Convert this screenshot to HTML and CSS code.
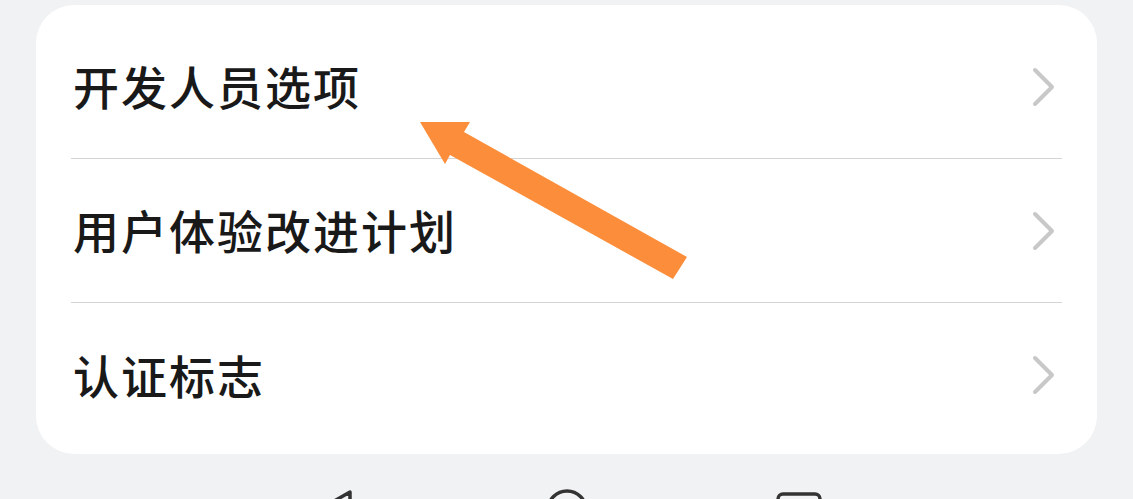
FILE: index.html
```html
<!DOCTYPE html>
<html lang="zh-CN">
<head>
  <meta charset="UTF-8" />
  <meta name="viewport" content="width=device-width, initial-scale=1.0"/>
  <title>设置</title>
  <link rel="stylesheet" href="styles.css">
</head>
<body>
  <div class="card">
    <div class="row">
      <div class="row-inner">
        <span class="label">开发人员选项</span>
        <svg class="chevron" width="26" height="40" viewBox="0 0 26 40"><path d="M4 3 L21 20 L4 37" /></svg>
      </div>
    </div>
    <div class="row">
      <div class="row-inner">
        <span class="label">用户体验改进计划</span>
        <svg class="chevron" width="26" height="40" viewBox="0 0 26 40"><path d="M4 3 L21 20 L4 37" /></svg>
      </div>
    </div>
    <div class="row last">
      <div class="row-inner">
        <span class="label">认证标志</span>
        <svg class="chevron" width="26" height="40" viewBox="0 0 26 40"><path d="M4 3 L21 20 L4 37" /></svg>
      </div>
    </div>
  </div>

  <div class="navbar">
    <svg class="nav-icon" width="60" height="50" viewBox="0 0 60 50"><path d="M45 4 L45 36 L17 20 Z" /></svg>
    <svg class="nav-icon" width="60" height="50" viewBox="0 0 60 50"><circle cx="30" cy="22" r="19" /></svg>
    <svg class="nav-icon" width="60" height="50" viewBox="0 0 60 50"><rect x="9" y="6" width="42" height="40" rx="5" /></svg>
  </div>

  <!-- annotation arrow drawn over the screenshot -->
  <svg class="pointer" width="1133" height="499" viewBox="0 0 1133 499">
    <polygon points="420,122 470,122 464,132 687,257 673,279 450,155 445,164" />
  </svg>
</body>
</html>
```

FILE: styles.css
```css
body {
  font-family: "Noto Sans CJK SC", "Noto Sans", sans-serif;
  background-color: #f1f2f4;
  margin: 0;
  padding: 0;
  height: 499px;
  overflow: hidden;
  position: relative;
}
.card {
  background-color: #ffffff;
  margin: 5px 36px 0 36px;
  padding: 10px 0 7px 0;
  border-radius: 38px;
}
.row {
  padding: 0 35px;
}
.row-inner {
  height: 143px;
  display: flex;
  align-items: center;
  justify-content: space-between;
  border-bottom: 1px solid #d4d4d4;
}
.row.last .row-inner {
  border-bottom: none;
  height: 144px;
}
.label {
  font-size: 46px;
  font-weight: 500;
  color: #191919;
  padding-left: 2px;
  letter-spacing: 2px;
  margin-top: -3px;
}
.chevron {
  margin-right: 5px;
}
.chevron path {
  fill: none;
  stroke: #c8c8c8;
  stroke-width: 4;
  stroke-linecap: round;
  stroke-linejoin: round;
}
.navbar {
  display: grid;
  grid-template-columns: repeat(3, 232px);
  justify-content: center;
  justify-items: center;
  padding-top: 34px;
  height: 11px;
  overflow: hidden;
}
.nav-icon path,
.nav-icon circle,
.nav-icon rect {
  fill: none;
  stroke: #333333;
  stroke-width: 3.5;
  stroke-linejoin: round;
}
.pointer {
  position: absolute;
  left: 0;
  top: 0;
  pointer-events: none;
}
.pointer polygon {
  fill: #fc8e3b;
}
```
